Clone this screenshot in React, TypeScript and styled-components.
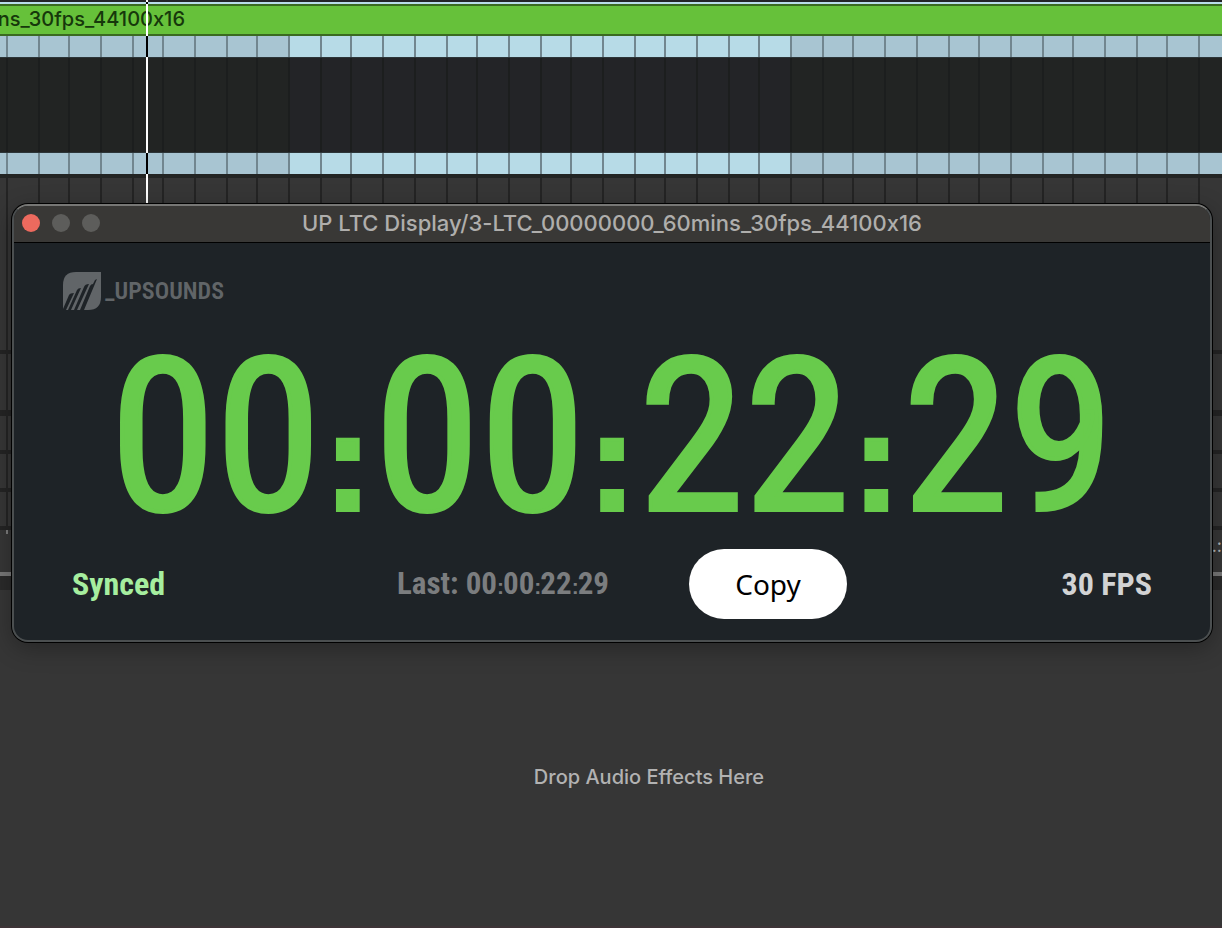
import React from "react";
import styled, { createGlobalStyle } from "styled-components";

const GlobalStyle = createGlobalStyle`
  * { box-sizing: border-box; }
  html, body { margin: 0; min-height: 100%; background: #363636; }
  body {
    font-family: Inter, "Liberation Sans", sans-serif;
    font-feature-settings: "calt" 0;
    overflow: hidden;
  }
`;

/* One bar of sixteen beats, snapped to even pixels. */
const BEATS = [0, 32, 62, 94, 126, 158, 188, 220, 252, 282, 314, 346, 376, 408, 440, 470];
const beatLines = (color: string) =>
  `linear-gradient(90deg, ${BEATS.map(
    (x) => `transparent ${x}px, ${color} ${x}px, ${color} ${x + 2}px, transparent ${x + 2}px`
  ).join(", ")})`;

const Workspace = styled.main`
  position: relative;
  display: flex;
  flex-direction: column;
  min-height: 100vh;
  background: #363636;
`;

const TopEdge = styled.div`
  height: 4px;
  background: #b9dde8;
  border-top: 2px solid #232527;
`;

const ClipHeader = styled.div`
  height: 32px;
  border: solid #3a6a20;
  border-width: 2px 0;
  background: #66c13a;
  color: #16380b;
`;

const ClipName = styled.div`
  display: flex;
  justify-content: flex-end;
  width: 185px;
  overflow: hidden;
  font-size: 20px;
  font-weight: 500;
  line-height: 27px;
  white-space: nowrap;
`;

const Strip = styled.div<{ $height: number; $base: string; $active: string; $line: string }>`
  height: ${(p) => p.$height}px;
  background:
    ${(p) => beatLines(p.$line)} 288px 0 / 502px 100% repeat-x,
    linear-gradient(
      90deg,
      ${(p) => p.$base} 290px,
      ${(p) => p.$active} 290px,
      ${(p) => p.$active} 790px,
      ${(p) => p.$base} 790px
    );
`;

const Waveform = styled(Strip)`
  border: solid #2c3538;
  border-width: 1px 0;
`;

const Lanes = styled.div`
  border-top: 4px solid #232524;
  background: ${beatLines("#242424")} 288px 0 / 502px 100% repeat-x, #363636;
`;

const Lane = styled.div<{ $height: number; $rule: number }>`
  height: ${(p) => p.$height}px;
  border-bottom: ${(p) => p.$rule}px solid #242424;
`;

const Ruler = styled.div`
  display: flex;
  justify-content: flex-end;
  height: 46px;
  border-bottom: 4px solid #777777;
  color: #b5b5b5;
  font-size: 18px;
  line-height: 32px;
  background: linear-gradient(#7c7c7c, #7c7c7c) 6px 0 / 2px 4px no-repeat;
`;

const Divider = styled.div`
  height: 14px;
  background: #2a2a2a;
`;

const DeviceView = styled.section`
  flex: 1;
  display: flex;
  justify-content: center;
  padding: 174px 0 0 76px;
  border-bottom: 2px solid #3d3437;
  color: #b2b2b2;
  font-size: 20px;
  font-weight: 500;
  line-height: 26px;
`;

const Playhead = styled.div`
  position: absolute;
  top: 0;
  left: 146px;
  width: 2px;
  height: 204px;
  background: linear-gradient(
    #fff 2px, #000 2px, #000 4px, #fff 4px, #fff 36px, #000 36px, #000 57px,
    #fff 57px, #fff 153px, #000 153px, #000 174px, #fff 174px
  );
`;

const Window = styled.section`
  position: absolute;
  top: 204px;
  left: 12px;
  right: 10px;
  border: 2px solid #4b4f50;
  border-top-color: #777775;
  border-radius: 16px;
  background: #1e2327;
  box-shadow: 0 0 0 1px #000, 0 6px 24px rgba(0, 0, 0, 0.3);
  overflow: hidden;
`;

const TitleBar = styled.header`
  display: grid;
  grid-template-columns: 1fr auto 1fr;
  align-items: center;
  height: 37px;
  padding: 0 8px 2px;
  border-bottom: 1px solid #000;
  background: #393836;
`;

const Lights = styled.div`
  display: flex;
  gap: 12px;
`;

const Light = styled.button<{ $color: string }>`
  width: 18px;
  height: 18px;
  padding: 0;
  border: 0;
  border-radius: 50%;
  background: ${(p) => p.$color};
`;

const Title = styled.h1`
  margin: 0;
  color: #afaeac;
  font-size: 22px;
  font-weight: 500;
  line-height: 32px;
  white-space: nowrap;
`;

const Panel = styled.div`
  padding: 29px 58px 21px;
  font-family: "Roboto Condensed", "Liberation Sans Narrow", "Liberation Sans", sans-serif;
`;

const Brand = styled.div`
  display: flex;
  align-items: center;
  gap: 4px;
  height: 38px;
  margin-left: -9px;
  color: #616568;
  font-size: 24px;
  font-weight: 600;
  line-height: 28px;
`;

const Timecode = styled.div`
  margin: 37px 0 22px;
  color: #68cb4c;
  font-size: 214px;
  line-height: 180px;
  text-align: center;
  white-space: nowrap;
  -webkit-text-stroke: 4px #68cb4c;
`;

/* Low, square colon set in a smaller size than the digits around it. */
const Colon = styled.span<{ $size: number; $width: number }>`
  display: inline-block;
  width: ${(p) => p.$width}px;
  font-family: "Liberation Sans", sans-serif;
  font-size: ${(p) => p.$size}px;
  font-weight: 700;
  line-height: 0;
  text-align: center;
`;

const Footer = styled.footer`
  display: grid;
  grid-template-columns: 325fr 292fr 158px 305fr;
  align-items: center;
`;

const Status = styled.span<{ $color: string; $size?: number; $end?: boolean }>`
  color: ${(p) => p.$color};
  font-size: ${(p) => p.$size ?? 32}px;
  font-weight: 700;
  line-height: 40px;
  text-align: ${(p) => (p.$end ? "right" : "left")};
  white-space: nowrap;
`;

const CopyButton = styled.button`
  height: 70px;
  padding: 0;
  border: 0;
  border-radius: 35px;
  background: #fff;
  color: #000;
  font-family: "Noto Sans", "Open Sans", sans-serif;
  font-size: 28px;
`;

const BrandMark = () => (
  <svg width="38" height="38" viewBox="0 0 38 38" aria-hidden="true">
    <path d="M13 0H38V25Q38 38 25 38H0V13Q0 0 13 0Z" fill="#616568" />
    <path
      d="M0 37L6 23Q7 21 11 21L3 38H0ZM5 38L14 18Q15 16 18 16L8 38ZM11 38L21 15Q22 12 26 12L14 38ZM17 38L27 14Q28 12 30 12L32 8L34 7L21 38Z"
      fill="#1e2327"
    />
  </svg>
);

const Time = ({ value, size, width }: { value: string; size: number; width: number }) => (
  <>
    {value.split(":").map((part, i) => (
      <React.Fragment key={i}>
        {i > 0 && (
          <Colon $size={size} $width={width}>
            :
          </Colon>
        )}
        {part}
      </React.Fragment>
    ))}
  </>
);

export default function App() {
  return (
    <Workspace>
      <GlobalStyle />
      <TopEdge />
      <ClipHeader>
        <ClipName>3-LTC_00000000_60mins_30fps_44100x16</ClipName>
      </ClipHeader>
      <Strip $height={21} $base="#a8c5d2" $active="#b7dbe7" $line="#71868f" />
      <Waveform $height={96} $base="#222423" $active="#232427" $line="#1c1e1e" />
      <Strip $height={21} $base="#a8c5d2" $active="#b7dbe7" $line="#71868f" />
      <Lanes>
        <Lane $height={176} $rule={4} />
        <Lane $height={62} $rule={6} />
        <Lane $height={38} $rule={4} />
        <Lane $height={38} $rule={4} />
        <Lane $height={38} $rule={4} />
      </Lanes>
      <Ruler>.:</Ruler>
      <Divider />
      <DeviceView>Drop Audio Effects Here</DeviceView>
      <Playhead />
      <Window aria-label="UP LTC Display">
        <TitleBar>
          <Lights>
            <Light $color="#ed6a5e" aria-label="Close" />
            <Light $color="#5d5d5b" aria-label="Minimize" />
            <Light $color="#5d5d5b" aria-label="Zoom" />
          </Lights>
          <Title>UP LTC Display/3-LTC_00000000_60mins_30fps_44100x16</Title>
        </TitleBar>
        <Panel>
          <Brand>
            <BrandMark />
            _UPSOUNDS
          </Brand>
          <Timecode>
            <Time value="00:00:22:29" size={140} width={53} />
          </Timecode>
          <Footer>
            <Status $color="#a6ee9f">Synced</Status>
            <Status $color="#7b7d7f" $size={31}>
              Last: <Time value="00:00:22:29" size={21} width={6} />
            </Status>
            <CopyButton type="button">Copy</CopyButton>
            <Status $color="#d2d3d4" $end>
              30 FPS
            </Status>
          </Footer>
        </Panel>
      </Window>
    </Workspace>
  );
}
